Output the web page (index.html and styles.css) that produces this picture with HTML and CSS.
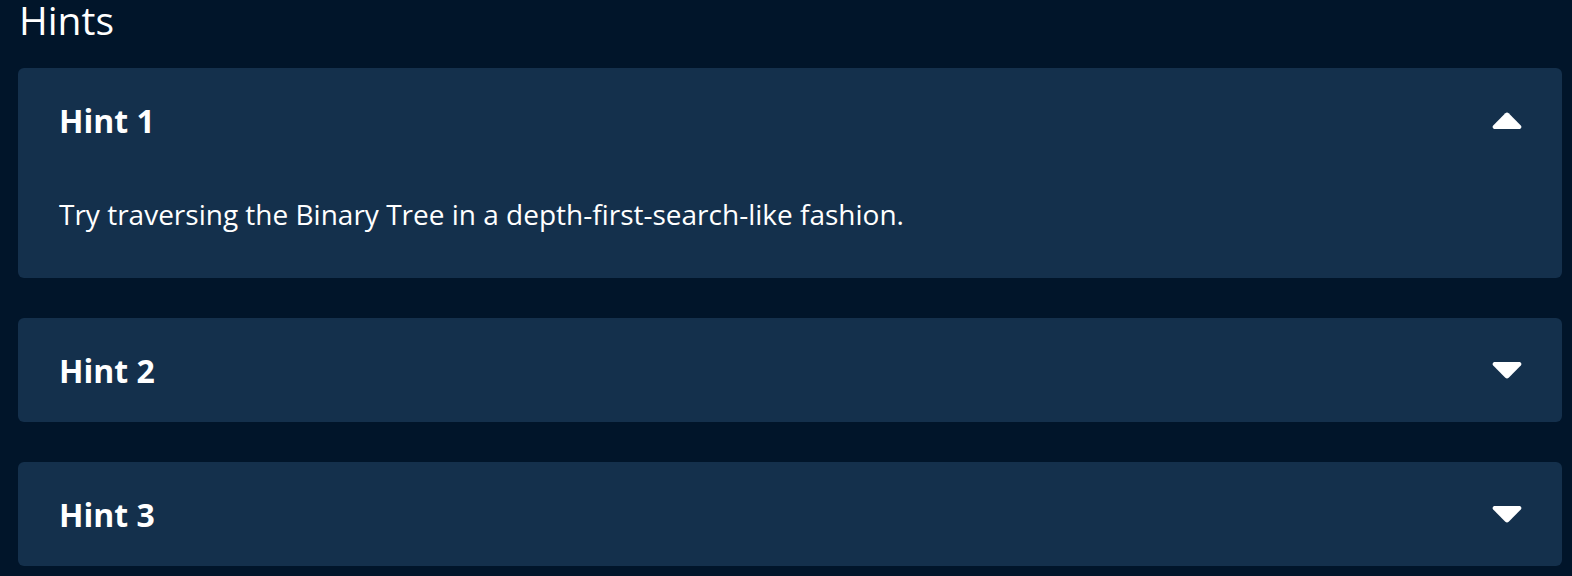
FILE: index.html
```html
<!DOCTYPE html>
<html lang="en">
<head>
<meta charset="utf-8">
<link rel="stylesheet" href="styles.css">
</head>
<body>
<main class="page">
  <h2 class="title">Hints</h2>
  <div class="hints">
    <section class="hint open">
      <div class="hint-head">
        <span class="hint-name">Hint 1</span>
        <svg class="caret" viewBox="0 0 30 17" width="30" height="17"><path d="M13.3 1.2 Q15 -0.4 16.7 1.2 L28.8 13.6 Q30.4 15.6 28 17 L2 17 Q-0.4 15.6 1.2 13.6 Z" fill="#fff"/></svg>
      </div>
      <p class="hint-body">Try traversing the Binary Tree in a depth-first-search-like fashion.</p>
    </section>
    <section class="hint">
      <div class="hint-head">
        <span class="hint-name">Hint 2</span>
        <svg class="caret" viewBox="0 0 30 17" width="30" height="17"><path d="M13.3 15.8 Q15 17.4 16.7 15.8 L28.8 3.4 Q30.4 1.4 28 0 L2 0 Q-0.4 1.4 1.2 3.4 Z" fill="#fff"/></svg>
      </div>
    </section>
    <section class="hint">
      <div class="hint-head">
        <span class="hint-name">Hint 3</span>
        <svg class="caret" viewBox="0 0 30 17" width="30" height="17"><path d="M13.3 15.8 Q15 17.4 16.7 15.8 L28.8 3.4 Q30.4 1.4 28 0 L2 0 Q-0.4 1.4 1.2 3.4 Z" fill="#fff"/></svg>
      </div>
    </section>
  </div>
</main>
</body>
</html>
```
FILE: styles.css
```css
html, body {
  margin: 0;
  padding: 0;
  background: #01152a;
}
body {
  font-family: "Open Sans", "Noto Sans", sans-serif;
  color: #ffffff;
}
.page {
  padding: 0 10px 0 18px;
}
.title {
  margin: 0;
  padding: 0 0 0 1px;
  font-size: 39px;
  font-weight: 400;
  line-height: 40px;
  height: 68px;
}
.hints {
  display: flex;
  flex-direction: column;
  gap: 40px;
}
.hint {
  background: #14304c;
  border-radius: 6px;
}
.hint-head {
  height: 104px;
  display: flex;
  align-items: center;
  justify-content: space-between;
  padding: 0 40px 0 41px;
}
.hint-name {
  font-size: 32px;
  font-weight: 700;
}
.caret {
  display: block;
}
.hint-body {
  margin: 0;
  padding: 22px 41px 0;
  height: 106px;
  box-sizing: border-box;
  font-size: 28px;
  line-height: 40px;
}
```
